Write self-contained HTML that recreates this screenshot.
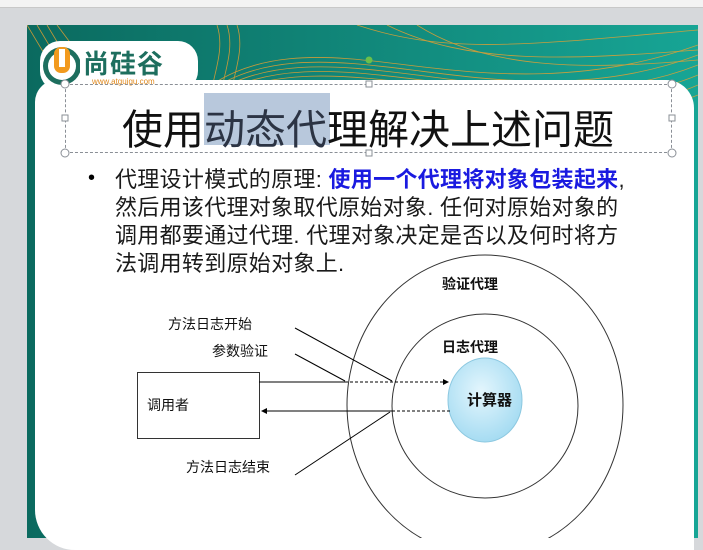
<!DOCTYPE html>
<html><head><meta charset="utf-8"><style>
body{margin:0;width:703px;height:538px;overflow:hidden;background:#d6d8db;font-family:"Liberation Sans","Noto Sans CJK SC",sans-serif;position:relative}
.abs{position:absolute}
</style></head><body>
<div class="abs" style="left:0;top:0;width:703px;height:7px;background:#f3f3f3;border-bottom:1px solid #c8c8c8"></div>
<div class="abs" style="left:27px;top:25px;width:671px;height:513px;background:#0d7468;overflow:hidden">
<svg width="671" height="513" style="position:absolute;left:0;top:0">
<defs><linearGradient id="tg" x1="0" x2="1"><stop offset="0" stop-color="#0b6a5f"/><stop offset="1" stop-color="#17a595"/></linearGradient></defs>
<rect width="671" height="513" fill="url(#tg)"/>
<g fill="none" stroke="#e8a030" stroke-width="0.8" opacity="0.85">
<path d="M160 80 C220 20 300 30 380 40 S560 60 671 20"/>
<path d="M165 80 C225 25 305 35 385 45 S565 70 671 30"/>
<path d="M170 80 C230 30 310 40 390 50 S570 80 671 40"/>
<path d="M175 80 C235 35 315 45 395 55 S575 90 671 50"/>
<path d="M180 80 C240 40 320 50 400 60 S580 100 671 60"/>
<path d="M185 80 C245 45 325 55 405 65 S585 105 671 70"/>
<path d="M190 0 C200 30 180 60 185 80"/>
<path d="M200 0 C210 30 190 60 195 80"/>
<path d="M210 0 C220 30 200 60 205 80"/>
<path d="M330 0 C420 30 500 20 671 5"/>
<path d="M360 0 C440 40 540 35 671 25"/>
<path d="M390 0 C460 45 560 45 671 35"/>
<path d="M0 0 L30 50 M10 0 L40 50 M20 0 L50 50 M30 0 L60 40"/>
</g>
</svg>
</div>
<div class="abs" style="left:35px;top:80px;width:659px;height:470px;background:#fff;border-radius:22px 28px 0 40px"></div>
<div class="abs" style="left:40px;top:41px;width:158px;height:50px;background:#fff;border-radius:20px"></div>
<svg class="abs" style="left:40px;top:41px" width="40" height="50">
<circle cx="22" cy="25" r="19" fill="#1d6e5e"/>
<circle cx="22" cy="25" r="14" fill="#fff"/>
<rect x="14" y="6" width="16" height="26" rx="7" fill="#f29a1e"/>
<rect x="19" y="8" width="6" height="18" fill="#fff"/>
</svg>
<div class="abs" style="left:83px;top:44px;font-size:26px;font-weight:bold;color:#1d6e5e;letter-spacing:1px">尚硅谷</div>
<div class="abs" style="left:92px;top:77px;font-size:8px;color:#e08a20">www.atguigu.com</div>
<div class="abs" style="left:204px;top:93px;width:126px;height:52px;background:#b8c8dc"></div>
<div class="abs" style="left:65px;top:84px;width:607px;height:69px;border:1px dashed #8a8f96;box-sizing:border-box"></div>
<div class="abs" style="left:122px;top:96px;font-size:41px;color:#111;white-space:nowrap">使用<span style="color:#2c3444">动态代</span>理解决上述问题</div>
<svg class="abs" style="left:0;top:0" width="703" height="200">
<g fill="#fff" stroke="#8a8f96">
<circle cx="65" cy="84" r="4"/><circle cx="672" cy="84" r="4"/><circle cx="65" cy="153" r="4"/><circle cx="672" cy="153" r="4"/>
<rect x="366" y="81" width="6" height="6"/><rect x="366" y="150" width="6" height="6"/><rect x="62" y="115" width="6" height="6"/><rect x="669" y="115" width="6" height="6"/>
</g>
<circle cx="369" cy="60" r="3.5" fill="#6ac04a"/>
</svg>
<div class="abs" style="left:88px;top:167px;font-size:20px">•</div>
<div class="abs" style="left:115px;top:166px;font-size:22px;letter-spacing:0.3px;line-height:28px;color:#1a1a1a;width:560px;white-space:nowrap">代理设计模式的原理: <b style="color:#1a1ae0">使用一个代理将对象包装起来</b>,<br>然后用该代理对象取代原始对象. 任何对原始对象的<br>调用都要通过代理. 代理对象决定是否以及何时将方<br>法调用转到原始对象上.</div>
<svg class="abs" style="left:0;top:0" width="703" height="538">
<defs><radialGradient id="cg" cx="0.45" cy="0.4" r="0.6"><stop offset="0" stop-color="#e4f6fd"/><stop offset="1" stop-color="#a6dcf2"/></radialGradient>
<marker id="ar" markerWidth="6" markerHeight="6" refX="5" refY="3" orient="auto"><path d="M0 0 L6 3 L0 6z" fill="#000"/></marker></defs>
<ellipse cx="485" cy="405" rx="138" ry="150" fill="none" stroke="#333" stroke-width="1"/>
<ellipse cx="485" cy="406" rx="93" ry="92" fill="none" stroke="#333" stroke-width="1"/>
<ellipse cx="485" cy="400" rx="37" ry="42" fill="url(#cg)" stroke="#8cc8e0"/>
<rect x="137.5" y="372.5" width="122" height="66" fill="#fff" stroke="#333"/>
<line x1="259" y1="382" x2="345" y2="382" stroke="#000"/>
<line x1="345" y1="382" x2="448" y2="382" stroke="#000" stroke-dasharray="3,2" marker-end="url(#ar)"/>
<line x1="450" y1="411" x2="392" y2="411" stroke="#000" stroke-dasharray="3,2"/>
<line x1="392" y1="411" x2="262" y2="411" stroke="#000" marker-end="url(#ar)"/>
<line x1="295" y1="328" x2="392" y2="381" stroke="#000"/>
<line x1="295" y1="354" x2="345" y2="381" stroke="#000"/>
<line x1="295" y1="475" x2="390" y2="412" stroke="#000"/>
<g font-size="14" fill="#111" font-family="Liberation Sans,Noto Sans CJK SC,sans-serif">
<text x="168" y="329">方法日志开始</text>
<text x="212" y="356">参数验证</text>
<text x="186" y="472">方法日志结束</text>
<text x="147" y="410">调用者</text>
<text x="442" y="289" font-weight="bold">验证代理</text>
<text x="442" y="352" font-weight="bold">日志代理</text>
<text x="467" y="405" font-weight="bold" font-size="15">计算器</text>
</g>
</svg>
</body></html>
